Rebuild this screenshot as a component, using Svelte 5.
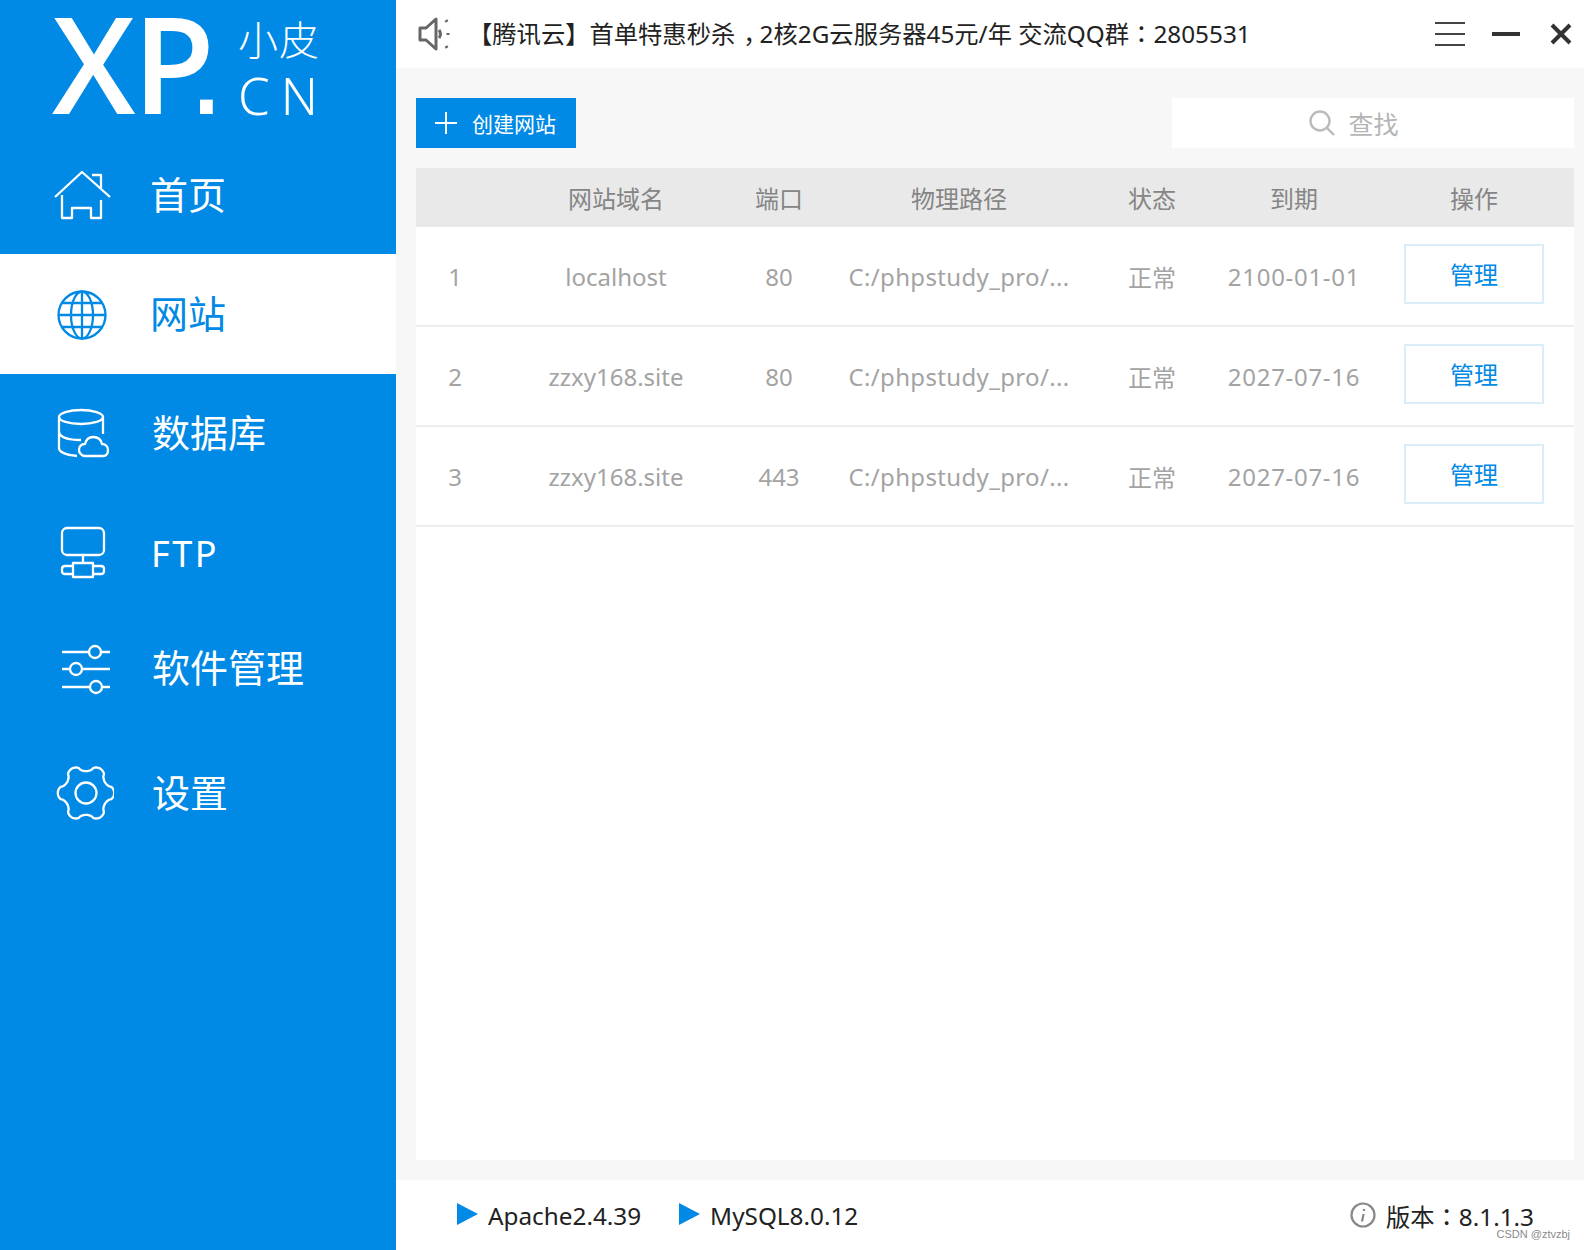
<script lang="ts">
  const sites = [
    { id: 1, domain: 'localhost', port: '80', path: 'C:/phpstudy_pro/...', status: '正常', expire: '2100-01-01' },
    { id: 2, domain: 'zzxy168.site', port: '80', path: 'C:/phpstudy_pro/...', status: '正常', expire: '2027-07-16' },
    { id: 3, domain: 'zzxy168.site', port: '443', path: 'C:/phpstudy_pro/...', status: '正常', expire: '2027-07-16' },
  ];

  const columns = ['', '网站域名', '端口', '物理路径', '状态', '到期', '操作'];

  // scalloped six-lobed outline for the settings gear
  const gearPoints = Array.from({ length: 180 }, (_, i) => {
    const a = (i / 180) * Math.PI * 2;
    const c = Math.cos(6 * a);
    const r = 25 + 3.2 * Math.sign(c) * Math.pow(Math.abs(c), 0.6);
    return `${(32 + r * Math.cos(a)).toFixed(2)},${(30 + r * Math.sin(a)).toFixed(2)}`;
  }).join(' ');
</script>

<div class="app">
  <aside class="sidebar">
    <div class="logo">
      <span class="logo-mark">XP<span class="logo-dot">.</span></span>
      <div class="logo-side">
        <span class="logo-cn">小皮</span>
        <span class="logo-tld">CN</span>
      </div>
    </div>

    <nav class="nav">
      <div class="nav-item home">
        <svg class="nav-icon" viewBox="0 0 60 60">
          <path d="M1 32 28 7 56 32M8 30V53H18V43H37V53H47V35M38 10H47V23" />
        </svg>
        <span class="label">首页</span>
      </div>
      <div class="nav-item active">
        <svg class="nav-icon" viewBox="0 0 60 60">
          <circle cx="28" cy="31" r="23.5" />
          <ellipse cx="28" cy="31" rx="11" ry="23.5" />
          <path d="M28 7.5V54.5M4.5 31H51.5M8 19H48M8 43H48" />
        </svg>
        <span class="label">网站</span>
      </div>
      <div class="nav-item db">
        <svg class="nav-icon" viewBox="0 0 60 60">
          <ellipse cx="27" cy="14" rx="22" ry="7" />
          <path d="M5 14V45C5 49 12 52 23 53M49 14V31M5 29C6 34 14 37 27 37" />
          <path d="M31 53H49C53 53 54 50 54 47 54 43 51 41 48 41 47 36 43 34 39 34 35 34 32 37 31 41 27 41 25 44 25 47 25 50 28 53 31 53Z" />
        </svg>
        <span class="label">数据库</span>
      </div>
      <div class="nav-item ftp">
        <svg class="nav-icon" viewBox="0 0 60 60">
          <rect x="8" y="5" width="42" height="27" rx="5" />
          <path d="M29 32V40M19 40H39V43H47Q50 43 50 46V48Q50 51 47 51H39V54H19V51H11Q8 51 8 48V46Q8 43 11 43H19ZM19 40V54M39 40V54" />
        </svg>
        <span class="latin">FTP</span>
      </div>
      <div class="nav-item soft">
        <svg class="nav-icon" viewBox="0 0 60 60">
          <path d="M8 14H35M47 14H56M8 31H16M28 31H56M8 49H36M48 49H56" />
          <circle cx="41" cy="14" r="6" />
          <circle cx="22" cy="31" r="6" />
          <circle cx="42" cy="49" r="6" />
        </svg>
        <span class="label">软件管理</span>
      </div>
      <div class="nav-item gear">
        <svg class="nav-icon" viewBox="0 0 60 60">
          <polygon points={gearPoints} />
          <circle cx="32" cy="30" r="10.5" />
        </svg>
        <span class="label">设置</span>
      </div>
    </nav>
  </aside>

  <main class="main">
    <header class="topbar">
      <svg class="speaker" viewBox="0 0 34 34" width="34" height="34">
        <path d="M3 11H9L19 2V32L9 23H3Z" />
        <path d="M22 13Q25 17 22 21M29 3 30 5M31 16V18M29 29 30 31" />
      </svg>
      <span class="notice">【腾讯云】首单特惠秒杀<span class="comma">，</span>2核2G云服务器45元/年 交流QQ群<span class="tc">：</span>2805531</span>
      <div class="win-controls">
        <svg viewBox="0 0 30 24" width="30" height="24" class="win-menu">
          <path d="M0 1H30M0 12H30M0 23H30" />
        </svg>
        <span class="win-min"></span>
        <svg viewBox="0 0 22 22" width="22" height="22" class="win-close">
          <path d="M2 2 20 20M20 2 2 20" />
        </svg>
      </div>
    </header>

    <section class="content">
      <div class="toolbar">
        <button class="create-btn">
          <svg viewBox="0 0 22 22" width="22" height="22"><path d="M11 0V22M0 11H22" /></svg>
          <span>创建网站</span>
        </button>
        <div class="search">
          <svg viewBox="0 0 26 26" width="26" height="26">
            <circle cx="11" cy="11" r="9.5" />
            <path d="M18 18 25 25" />
          </svg>
          <span>查找</span>
        </div>
      </div>

      <div class="panel">
        <div class="row head">
          {#each columns as col}
            <div class="cell">{col}</div>
          {/each}
        </div>
        {#each sites as site}
          <div class="row">
            <div class="cell">{site.id}</div>
            <div class="cell">{site.domain}</div>
            <div class="cell">{site.port}</div>
            <div class="cell path">{site.path}</div>
            <div class="cell">{site.status}</div>
            <div class="cell date">{site.expire}</div>
            <div class="cell"><button class="manage-btn">管理</button></div>
          </div>
        {/each}
      </div>
    </section>

    <footer class="footer">
      <div class="service">
        <span class="play"></span>
        <span>Apache2.4.39</span>
      </div>
      <div class="service">
        <span class="play"></span>
        <span>MySQL8.0.12</span>
      </div>
      <div class="version">
        <svg viewBox="0 0 26 26" width="26" height="26">
          <circle cx="13" cy="13" r="11.5" />
          <path d="M14 7V9M13.6 12 12 19.5" />
        </svg>
        <span>版本<span class="tc">：</span>8.1.1.3</span>
      </div>
      <span class="watermark">CSDN @ztvzbj</span>
    </footer>
  </main>
</div>

<style>
  :global(body) {
    margin: 0;
    background: #fff;
  }

  .app {
    position: relative;
    display: flex;
    width: 1584px;
    height: 1250px;
    overflow: hidden;
    font-family: "Noto Sans", "Noto Sans CJK SC", sans-serif;
  }

  button {
    font-family: inherit;
    cursor: pointer;
  }

  .tc {
    font-family: "Noto Sans CJK TC", sans-serif;
  }

  /* sidebar */
  .sidebar {
    width: 396px;
    flex-shrink: 0;
    background: #0089e5;
    color: #fff;
  }

  .logo {
    height: 136px;
    display: flex;
    align-items: flex-start;
    padding-left: 52px;
    box-sizing: border-box;
  }

  .logo-mark {
    font-family: "Open Sans", sans-serif;
    font-size: 134px;
    font-weight: 550;
    line-height: 124px;
    letter-spacing: -3px;
    white-space: nowrap;
  }

  .logo-dot {
    font-family: "Liberation Sans", sans-serif;
    font-weight: 400;
    margin-left: -24px;
  }

  .logo-side {
    display: flex;
    flex-direction: column;
    margin-left: 16px;
    padding-top: 16px;
  }

  .logo-cn {
    font-size: 40px;
    line-height: 48px;
    letter-spacing: 1px;
    font-weight: 300;
  }

  .logo-tld {
    font-family: "Noto Sans", sans-serif;
    font-weight: 300;
    font-size: 51px;
    line-height: 62px;
    letter-spacing: 11px;
  }

  .nav-item {
    display: flex;
    align-items: center;
    padding-left: 54px;
    font-size: 38px;
  }

  .nav-item .label {
    margin: 0 0 5px 38px;
  }

  .nav-item.home { height: 118px; }
  .nav-item.active { height: 120px; background: #fff; color: #0089e5; }
  .nav-item.db { height: 118px; }
  .nav-item.ftp { height: 122px; }
  .nav-item.soft { height: 108px; }
  .nav-item.gear { height: 142px; }

  .nav-item.home .label,
  .nav-item.active .label {
    margin-left: 36px;
  }

  .nav-item .latin {
    font-size: 36px;
    letter-spacing: 2.5px;
    margin-left: 37px;
  }

  .nav-icon {
    width: 60px;
    height: 60px;
    flex-shrink: 0;
    fill: none;
    stroke: currentColor;
    stroke-width: 2.3;
    stroke-linejoin: round;
  }

  /* main column */
  .main {
    flex: 1;
    display: flex;
    flex-direction: column;
    min-width: 0;
  }

  .topbar {
    height: 68px;
    flex-shrink: 0;
    display: flex;
    align-items: center;
    padding-left: 21px;
    box-sizing: border-box;
  }

  .speaker {
    fill: none;
    stroke: #666;
    stroke-width: 3;
    stroke-linejoin: round;
  }

  .notice {
    margin: 0 0 4px 17px;
    font-size: 24.3px;
    color: #222;
    white-space: nowrap;
  }

  .comma {
    display: inline-block;
    transform: translateX(8px);
  }

  .win-controls {
    margin-left: auto;
    display: flex;
    align-items: center;
    padding-right: 12px;
  }

  .win-menu {
    fill: none;
    stroke: #444;
    stroke-width: 2;
  }

  .win-min {
    width: 28px;
    height: 4px;
    margin-left: 27px;
    background: #333;
  }

  .win-close {
    margin-left: 30px;
    fill: none;
    stroke: #333;
    stroke-width: 4;
  }

  .content {
    flex: 1;
    display: flex;
    flex-direction: column;
    gap: 20px;
    padding: 30px 10px 20px 20px;
    background: #f7f7f7;
    min-height: 0;
  }

  .toolbar {
    height: 50px;
    display: flex;
    justify-content: space-between;
  }

  .create-btn {
    width: 160px;
    height: 50px;
    display: flex;
    align-items: center;
    gap: 15px;
    padding: 0 0 0 19px;
    border: none;
    background: #0089e5;
    color: #fff;
    font-size: 21px;
  }

  .create-btn svg {
    stroke: #fff;
    stroke-width: 2;
    flex-shrink: 0;
  }

  .search {
    width: 402px;
    box-sizing: border-box;
    display: flex;
    align-items: center;
    justify-content: center;
    gap: 13px;
    padding-right: 38px;
    background: #fff;
    color: #b5b5b5;
    font-size: 25px;
  }

  .search svg {
    fill: none;
    stroke: #bbb;
    stroke-width: 2.4;
  }

  .panel {
    flex: 1;
    background: #fff;
  }

  .row {
    display: grid;
    grid-template-columns: 78px 244px 82px 278px 108px 176px 184px 8px;
    align-items: center;
    height: 98px;
    border-bottom: 2px solid #eee;
    color: #a3a3a3;
    font-size: 24px;
    text-align: center;
  }

  .row.head {
    height: 59px;
    border-bottom: none;
    background: #e9e9e9;
    color: #858585;
  }

  .cell {
    white-space: nowrap;
  }

  .cell.path {
    letter-spacing: 0.35px;
  }

  .cell.date {
    letter-spacing: 0.7px;
  }

  .manage-btn {
    width: 140px;
    height: 60px;
    margin-top: -4px;
    border: 2px solid #d9edfb;
    background: #fff;
    color: #0089e5;
    font-size: 24px;
    padding: 0 0 1px;
  }

  /* footer */
  .footer {
    height: 70px;
    flex-shrink: 0;
    display: flex;
    align-items: center;
    padding-left: 61px;
    color: #222;
    font-size: 24.3px;
  }

  .service {
    display: flex;
    align-items: center;
    margin-right: 38px;
  }

  .play {
    width: 0;
    height: 0;
    margin: -2px 10px 0 0;
    border-left: 21px solid #0089e5;
    border-top: 11.5px solid transparent;
    border-bottom: 11.5px solid transparent;
  }

  .version {
    margin-left: auto;
    margin-right: 50px;
    display: flex;
    align-items: center;
    gap: 10px;
  }

  .version svg {
    fill: none;
    stroke: #888;
    stroke-width: 2.2;
  }

  .watermark {
    position: absolute;
    right: 14px;
    bottom: 10px;
    font-family: "Liberation Sans", sans-serif;
    font-size: 11px;
    color: #8a8a8a;
  }
</style>
